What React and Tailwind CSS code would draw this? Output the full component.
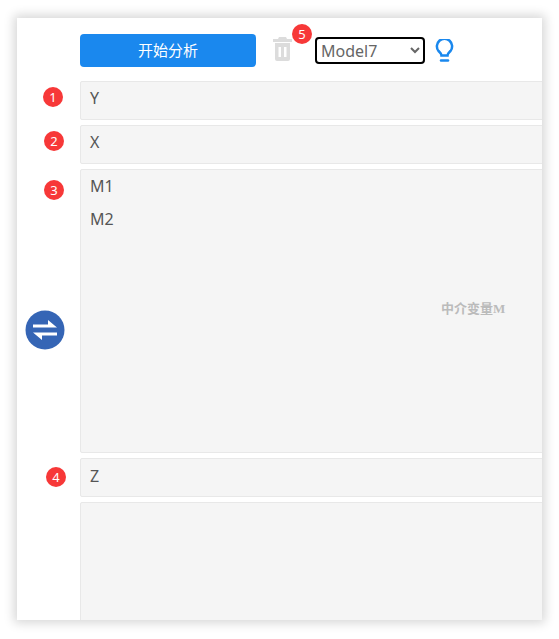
import React from 'react';

const font = 'font-["Noto_Sans","Noto_Sans_CJK_SC",sans-serif]';

const Badge = ({ n, className = '' }) => (
  <span className={`flex h-5 w-5 items-center justify-center rounded-full bg-[#f73838] text-[13px] leading-none text-white ${className}`}>{n}</span>
);

const DropBox = ({ className = '', children }) => (
  <div className={`relative w-[600px] shrink-0 rounded-[2px] border border-[#e8e8e8] bg-[#f5f5f5] pl-[9px] text-base text-[#555] ${className}`}>
    {children}
  </div>
);

const SwapIcon = () => (
  <svg viewBox="0 0 40 40" className="h-10 w-10">
    <circle cx="20" cy="20" r="19.500" fill="#3565b5" />
    <path d="M8 14.500h15V10l9 7.500H8z" fill="#fff" />
    <path d="M32 25.500H17V30l-9-7.500h24z" fill="#fff" />
  </svg>
);

const TrashIcon = () => (
  <svg viewBox="0 0 19 24" className="h-6 w-[19px]" fill="#dcdcdc">
    <path d="M6 0h7l1 2h5v3H0V2h5z" />
    <path fillRule="evenodd" d="M2 6h15v16a2 2 0 0 1-2 2H4a2 2 0 0 1-2-2zM5.500 10v10h2.500V10zM11 10v10h2.500V10z" />
  </svg>
);

const BulbIcon = () => (
  <svg viewBox="0 0 19 23" className="h-[23px] w-[19px]" fill="none" stroke="#1a88ee" strokeWidth="2.500">
    <path d="M6.500 16.500c0-2-1.500-3-3-4.500a7.600 7.600 0 1 1 12 0c-1.500 1.500-3 2.500-3 4.500z" />
    <path d="M6 21.500h7" strokeLinecap="round" />
  </svg>
);

export default function App() {
  return (
    <div className={`h-[639px] w-[559px] bg-white pl-[17px] pt-[18px] ${font}`}>
      <div className="flex h-[602px] w-[525px] flex-col gap-[5px] overflow-hidden bg-white pt-4 shadow-[0_0_10px_3px_rgba(0,0,0,0.16)]">
        {/* toolbar */}
        <div className="flex h-[42px] shrink-0 items-start pl-[63px]">
          <button className="h-[33px] w-44 rounded bg-[#1a88ee] text-[15px] text-white">开始分析</button>
          <div className="relative ml-[17px] mt-[3px] w-[42px]">
            <TrashIcon />
            <Badge n="5" className="absolute -top-[13px] left-[19px]" />
          </div>
          <select className="mt-[3px] h-[27px] w-[110px] rounded border-2 border-black bg-white text-base text-[#666]">
            <option>Model7</option>
          </select>
          <div className="ml-[10px] mt-[5px]"><BulbIcon /></div>
        </div>

        {/* Y */}
        <div className="flex shrink-0">
          <div className="w-[63px] shrink-0 pl-[26px] pt-[6px]"><Badge n="1" /></div>
          <DropBox className="h-[39px] pt-1">Y</DropBox>
        </div>

        {/* X */}
        <div className="flex shrink-0">
          <div className="w-[63px] shrink-0 pl-[27px] pt-[6px]"><Badge n="2" /></div>
          <DropBox className="h-[39px] pt-1">X</DropBox>
        </div>

        {/* M */}
        <div className="flex shrink-0">
          <div className="flex w-[63px] shrink-0 flex-col pl-2 pt-[11px]">
            <Badge n="3" className="ml-[19px]" />
            <div className="mt-[110px]"><SwapIcon /></div>
          </div>
          <DropBox className="h-[284px] pt-1">
            <div className="flex flex-col gap-[9px]">
              <span>M1</span>
              <span>M2</span>
            </div>
            <span className='absolute left-[360px] top-[129px] font-["Liberation_Serif","Noto_Sans_CJK_SC",serif] text-[13px] font-bold text-[#bbb]'>中介变量M</span>
          </DropBox>
        </div>

        {/* Z */}
        <div className="flex shrink-0">
          <div className="w-[63px] shrink-0 pl-[29px] pt-[9px]"><Badge n="4" /></div>
          <DropBox className="h-[39px] pt-[5px]">Z</DropBox>
        </div>

        {/* W */}
        <div className="flex shrink-0">
          <div className="w-[63px] shrink-0" />
          <DropBox className="h-[150px]" />
        </div>
      </div>
    </div>
  );
}
